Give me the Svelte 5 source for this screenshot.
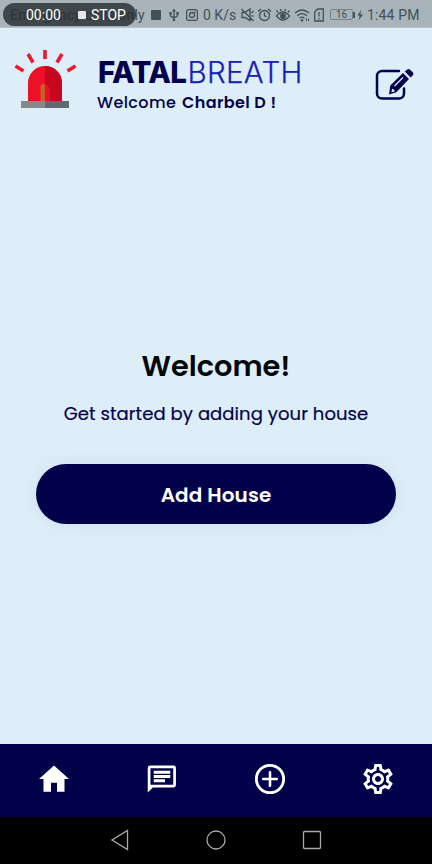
<script>
  const tabs = ['home', 'chat', 'add', 'settings'];
</script>

<main class="screen">
  <div class="status">
    <span class="carrier">Emergency calls only</span>
    <svg class="i" style:width="12px" viewBox="0 0 12 16"><rect x="1" y="3" width="10" height="10" rx="1" fill="currentColor" /></svg>
    <svg class="i usb" viewBox="0 0 12 16"><path d="M6 3v10M2.500 6v2.500q0 1.500 3.500 2 3.500-.5 3.500-2.500V6" class="line" /><path d="M6 1.500l2 3H4zM1.300 5h2.400v2.400H1.300zM8.300 5h2.400v2.400H8.300z" fill="currentColor" /><circle cx="6" cy="13" r="1.300" fill="currentColor" /></svg>
    <svg class="i insta" viewBox="0 0 12 16"><rect x=".6" y="2.600" width="10.800" height="10.800" rx="2" class="line" /><circle cx="6" cy="8" r="2.500" class="line" /><circle cx="9" cy="5" r=".8" fill="currentColor" /></svg>
    <span class="speed">0 K/s</span>
    <svg class="i mute" viewBox="0 0 15 16"><path d="M2 5.500h3l5-3.500v11.500L5 10.500H2zM1.500 2l12 12M11.500 6l2-2M11.500 9h2" class="line" /></svg>
    <svg class="i alarm" viewBox="0 0 15 16"><circle cx="7.500" cy="8.500" r="5" class="line" /><path d="M7.500 5.500v3.200l2 1.200M1 4.500l3-2.600M14 4.500l-3-2.600" class="line" /></svg>
    <svg class="i eye" viewBox="0 0 16 16"><path d="M1.500 9q6.500-8 13 0-6.500 8-13 0zM3 5.500L1.500 3.500M6 4L5.500 2M10 4l.5-2M13 5.500l1.500-2" class="line" /><circle cx="8" cy="9" r="2.900" fill="currentColor" /></svg>
    <svg class="i wifi" viewBox="0 0 17 16"><path d="M1 6q7-6 14 0M3.200 8.700q4.800-4 9.600 0M5.600 11.200q2.400-2 4.800 0" class="line" /><circle cx="8" cy="13.300" r="1.200" fill="currentColor" /><path d="M12.500 11.500v2.500M14.500 11.500v2.500" class="line thin" /></svg>
    <svg class="i sim" viewBox="0 0 10 16"><path d="M3.500 2h5.800v12H.7V5zM5 5v4.500M5 11v1.500" class="line" /></svg>
    <span class="battery">16</span>
    <svg class="i bolt" viewBox="0 0 11 16"><path d="M0 5h2v6H0zM8 3L4.500 8.500h2L6 13l4-5.500H7.500z" fill="currentColor" /></svg>
    <span class="time">1:44 PM</span>
    <div class="recorder"><span class="clock">00:00</span><i></i><span class="stop">STOP</span></div>
  </div>

  <header>
    <svg class="siren" width="64" height="60" viewBox="0 0 64 60">
      <g stroke="#ed1730" stroke-width="3.600"><path d="M31 0v9M14 4l5 8.500M48 4l-5 8.500M1.500 16l8 5M61.500 16l-8 5" /></g>
      <path d="M14 52V33a17 17 0 0 1 34 0v19z" fill="#ed1127" />
      <path d="M31 16a17 17 0 0 1 17 17v19H31z" fill="#c50720" />
      <path d="M31 34q5 2 5 7v11h-5z" fill="#ef0c25" />
      <path d="M26.500 36q0-2 4.500-2v18h-4.500z" fill="#c86124" />
      <path d="M7 51h24v7H7z" fill="#85898a" /><path d="M31 51h24v7H31z" fill="#626971" />
    </svg>
    <div class="brand">
      <h1><b>FATAL</b><span>BREATH</span></h1>
      <p><span class="hello">Welcome</span><strong>Charbel D !</strong></p>
    </div>
    <svg class="edit" width="40" height="34" viewBox="0 0 40 34">
      <path d="M25 4H8a5 5 0 0 0-5 5v17.500a5 5 0 0 0 5 5h17a5 5 0 0 0 5-5V21.500" fill="none" stroke="#02024b" stroke-width="2.500" stroke-linecap="round" />
      <path d="M15 27.500l1.300-9L29 6l6 6-12.700 13.200zM30.800 4.600l2.400-2.200q1.500-1 2.700 0l3 3q1 1.400 0 2.800l-2.300 2.200z" fill="#02024b" />
      <path d="M20.500 19l8.500-8.500" fill="none" stroke="#deeef9" stroke-width="1.200" /><path d="M18 21.800q2.500.2 2.800 2.800l-3.300.7z" fill="#deeef9" />
    </svg>
  </header>

  <section>
    <h2>Welcome!</h2>
    <p>Get started by adding your house</p>
    <button>Add House</button>
  </section>

  <nav class="tabs">
    {#each tabs as tab}
      <div class="tab">
        <svg width="36" height="36" viewBox="0 0 24 24" fill="#fff">
          {#if tab === 'home'}
            <path d="M10 20.500v-6h4v6h5v-8.500h3L12 3 2 12h3v8.500z" />
          {:else if tab === 'chat'}
            <path fill-rule="evenodd" d="M4 3h15.700a1.600 1.600 0 0 1 1.600 1.600v11.400a1.600 1.600 0 0 1-1.600 1.600H5.900L2.500 21V4.600A1.600 1.600 0 0 1 4 3zM4.300 4.800v11.100h15.200V4.800zM6.500 6.500h11v2h-11zM6.500 9.300h11v2h-11zM6.500 12.100h7.500v2H6.500z" />
          {:else if tab === 'add'}
            <circle cx="12" cy="12" r="9.100" fill="none" stroke="#fff" stroke-width="1.900" />
            <path d="M12 7.500v9M7.500 12h9" fill="none" stroke="#fff" stroke-width="1.700" stroke-linecap="round" />
          {:else}
            <path d="M19.430 12.980c.04-.32.07-.64.07-.98 0-.34-.03-.66-.07-.98l2.110-1.650c.19-.15.24-.42.12-.64l-2-3.460c-.09-.16-.26-.25-.44-.25-.06 0-.12.01-.17.03l-2.490 1c-.52-.4-1.080-.73-1.690-.98l-.38-2.650C14.460 2.180 14.250 2 14 2h-4c-.25 0-.46.18-.49.42l-.38 2.650c-.61.25-1.170.59-1.690.98l-2.490-1c-.06-.02-.12-.03-.18-.03-.17 0-.34.09-.43.25l-2 3.460c-.13.22-.07.49.12.64l2.110 1.650c-.04.32-.07.65-.07.98 0 .33.03.66.07.98l-2.110 1.650c-.19.15-.24.42-.12.64l2 3.460c.09.16.26.25.44.25.06 0 .12-.01.17-.03l2.490-1c.52.4 1.080.73 1.690.98l.38 2.650c.03.24.24.42.49.42h4c.25 0 .46-.18.49-.42l.38-2.650c.61-.25 1.170-.59 1.690-.98l2.490 1c.06.02.12.03.18.03.17 0 .34-.09.43-.25l2-3.460c.12-.22.07-.49-.12-.64l-2.110-1.650zm-1.980-1.710c.04.31.05.52.05.73 0 .21-.02.43-.05.73l-.14 1.130.89.7 1.080.84-.7 1.210-1.270-.51-1.040-.42-.9.68c-.43.32-.84.56-1.250.73l-1.060.43-.16 1.130-.2 1.350h-1.400l-.19-1.350-.16-1.130-1.060-.43c-.43-.18-.83-.41-1.230-.71l-.91-.7-1.060.43-1.270.51-.7-1.210 1.080-.84.89-.7-.14-1.130c-.03-.31-.05-.54-.05-.74s.02-.43.05-.73l.14-1.130-.89-.7-1.080-.84.7-1.210 1.270.51 1.040.42.9-.68c.43-.32.84-.56 1.250-.73l1.060-.43.16-1.130.2-1.350h1.390l.19 1.350.16 1.130 1.060.43c.43.18.83.41 1.230.71l.91.7 1.060-.43 1.270-.51.7 1.210-1.070.85-.89.7.14 1.130zM12 8c-2.210 0-4 1.790-4 4s1.790 4 4 4 4-1.790 4-4-1.790-4-4-4zm0 6c-1.100 0-2-.9-2-2s.9-2 2-2 2 .9 2 2-.9 2-2 2z" />
          {/if}
        </svg>
      </div>
    {/each}
  </nav>

  <div class="system">
    <svg width="24" height="24" viewBox="0 0 24 24"><path d="M19.500 2.500v19L4 12z" /></svg>
    <svg width="24" height="24" viewBox="0 0 24 24"><circle cx="12" cy="12" r="9" /></svg>
    <svg width="24" height="24" viewBox="0 0 24 24"><rect x="3.500" y="3.500" width="17" height="17" rx="1" /></svg>
  </div>
</main>

<style>
  :global(body) { margin: 0; }
  .screen { width: 432px; height: 864px; display: flex; flex-direction: column; overflow: hidden; background: #deeef9; font-family: Poppins, Inter, sans-serif; color: #02024b; }
  h1, h2, p { margin: 0; font-weight: 400; white-space: nowrap; }
  .status { position: relative; flex: none; height: 28px; display: flex; align-items: center; box-sizing: border-box; padding: 2px 0 0 10px; background: #a8b3ba; border-bottom: 1px solid #b7c3ca; color: #435056; font: 14px/20px Roboto, sans-serif; white-space: nowrap; }
  .carrier { width: 136px; flex: none; margin-right: 4px; letter-spacing: .2px; }
  .i { height: 16px; flex: none; }
  .line { fill: none; stroke: currentColor; stroke-width: 1.3; }
  .thin { stroke-width: 1; }
  .usb { width: 12px; margin-left: 6px; }
  .insta { width: 12px; margin-left: 6px; }
  .speed { width: 33px; margin-left: 5px; flex: none; }
  .mute { width: 15px; margin-left: 4px; }
  .alarm { width: 15px; margin-left: 2px; }
  .eye { width: 16px; margin-left: 3px; }
  .wifi { width: 17px; margin-left: 3px; }
  .sim { width: 10px; margin-left: 3px; }
  .battery { width: 23px; height: 11px; margin-left: 6px; border: 1px solid #76838a; border-radius: 2px; box-sizing: border-box; font-size: 10px; line-height: 10px; text-align: center; flex: none; }
  .bolt { width: 11px; }
  .time { margin-left: 3px; letter-spacing: .15px; }
  .recorder { position: absolute; left: 3px; top: 3px; width: 133px; height: 23px; border-radius: 12px; display: flex; align-items: center; background: rgba(38, 44, 47, .8); color: #fff; box-sizing: border-box; padding-left: 23px; }
  .clock { width: 52px; }
  .recorder i { width: 8px; height: 8px; background: #e5e7e8; border-radius: 1px; margin-right: 5px; }

  header { flex: none; display: flex; align-items: flex-start; height: 92px; padding: 22px 0 0 14px; box-sizing: border-box; }
  .siren { flex: none; }
  .brand { width: 277px; margin-left: 19px; }
  h1 { display: flex; font: 400 29.5px/36px Inter, sans-serif; margin: 4px 0 0 1px; }
  h1 b { font-weight: 800; width: 89.500px; letter-spacing: -.6px; }
  h1 span { font-weight: 300; color: #1722b5; letter-spacing: .3px; -webkit-text-stroke: .25px #1722b5; }
  .brand p { display: flex; font-size: 16px; line-height: 24px; letter-spacing: .4px; margin-top: 1px; }
  .hello { width: 85px; font-weight: 500; }
  .brand strong { font-weight: 600; }
  .edit { flex: none; margin-top: 17px; }

  section { flex: 1; display: flex; flex-direction: column; align-items: center; padding-top: 226px; }
  h2 { font-size: 28.8px; line-height: 40px; font-weight: 600; color: #040709; }
  section p { font-size: 18px; line-height: 28px; margin-top: 14px; letter-spacing: .07px; -webkit-text-stroke: .2px #02024b; }
  button { width: 360px; height: 60px; margin-top: 36px; padding: 2px 0 0; border: 0; border-radius: 30px; background: #02024b; color: #fff; font: 600 20px/30px Poppins, Inter, sans-serif; letter-spacing: .1px; box-shadow: 0 0 16px rgba(90, 130, 140, .14); }

  .tabs { flex: none; height: 73px; display: flex; background: #02024b; }
  .tab { flex: 1; display: flex; justify-content: center; align-items: center; padding-bottom: 4px; }
  .system { flex: none; height: 47px; background: #000; display: flex; justify-content: center; align-items: center; gap: 72px; }
  .system svg { fill: none; stroke: #a9a9a9; stroke-width: 1.3; margin-bottom: 1px; }
</style>
